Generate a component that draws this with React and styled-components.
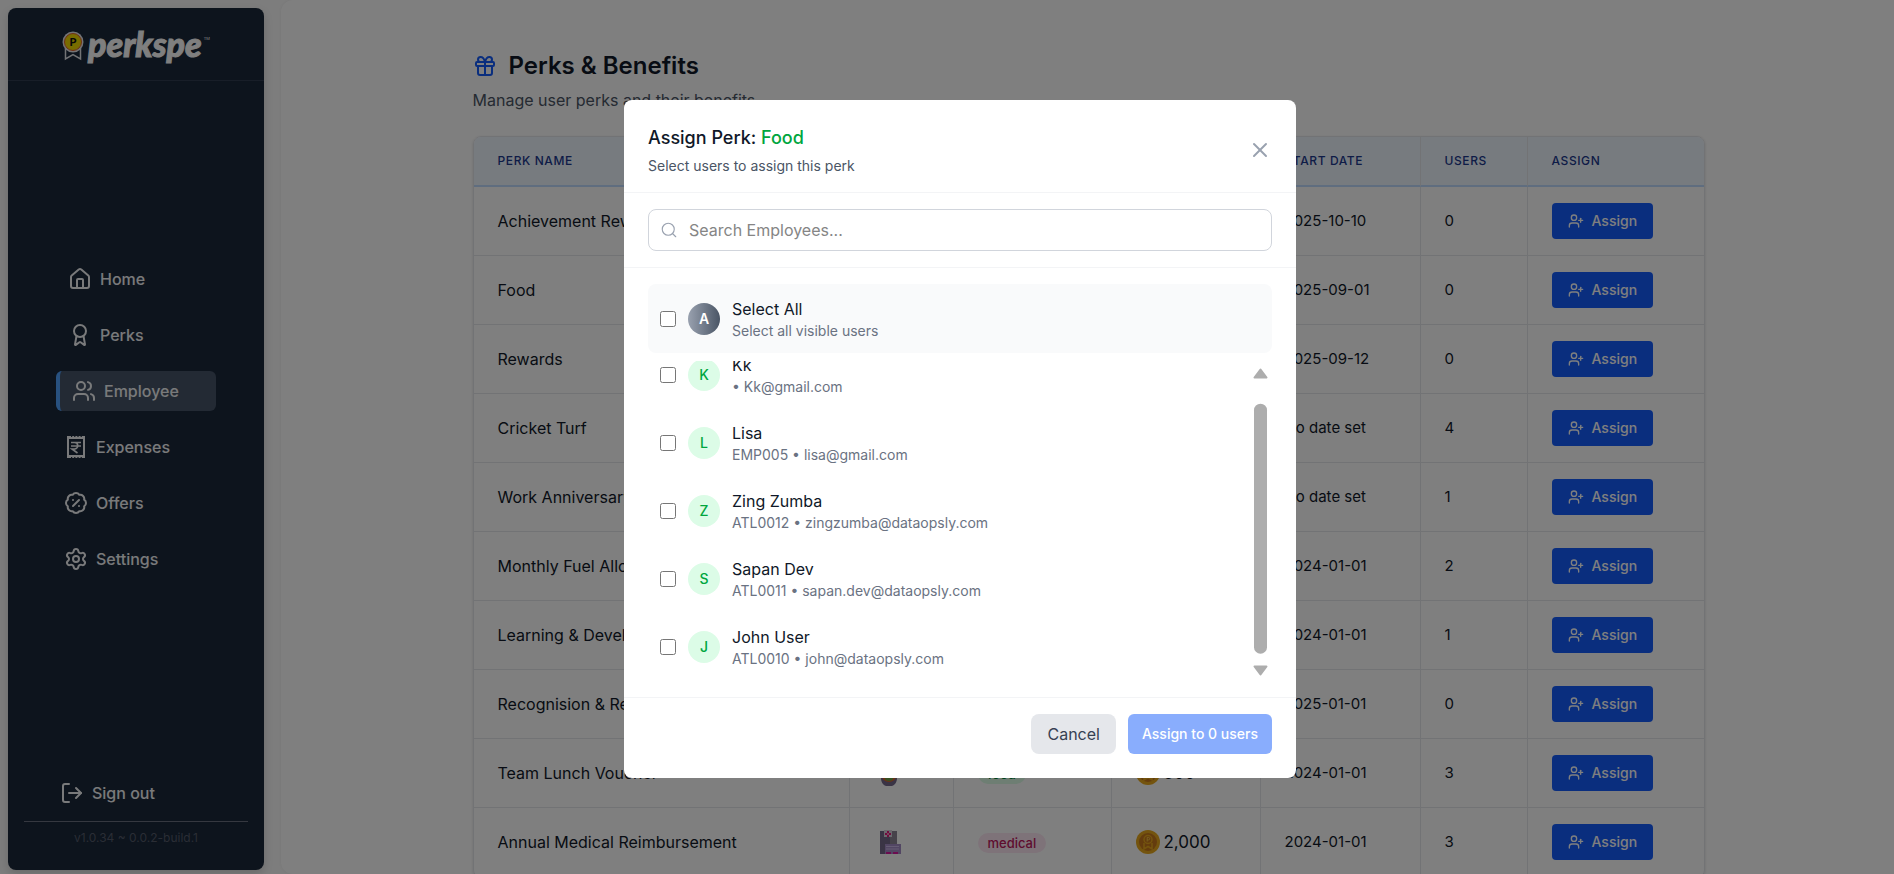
import { useLayoutEffect, useRef, useState } from 'react';
import styled, { createGlobalStyle, css } from 'styled-components';
import {
  Award,
  BadgePercent,
  Gift,
  House,
  LogOut,
  Search,
  Settings,
  UserPlus,
  Users,
  X,
} from 'lucide-react';

const PERKS = [
  { id: 1, name: 'Achievement Reward', category: 'reward', coins: '1,000', date: '2025-10-10', users: 0, art: 'food' },
  { id: 2, name: 'Food', category: 'food', coins: '500', date: '2025-09-01', users: 0, art: 'food' },
  { id: 3, name: 'Rewards', category: 'reward', coins: '500', date: '2025-09-12', users: 0, art: 'food' },
  { id: 4, name: 'Cricket Turf', category: 'sports', coins: '300', date: 'No date set', users: 4, art: 'food' },
  { id: 5, name: 'Work Anniversary', category: 'reward', coins: '1,000', date: 'No date set', users: 1, art: 'food' },
  { id: 6, name: 'Monthly Fuel Allowance', category: 'fuel', coins: '3,000', date: '2024-01-01', users: 2, art: 'food' },
  { id: 7, name: 'Learning & Development', category: 'learning', coins: '5,000', date: '2024-01-01', users: 1, art: 'food' },
  { id: 8, name: 'Recognision & Rewards', category: 'reward', coins: '1,000', date: '2025-01-01', users: 0, art: 'food' },
  { id: 9, name: 'Team Lunch Voucher', category: 'food', coins: '500', date: '2024-01-01', users: 3, art: 'food' },
  { id: 10, name: 'Annual Medical Reimbursement', category: 'medical', coins: '2,000', date: '2024-01-01', users: 3, art: 'medical' },
];

const EMPLOYEES = [
  { id: 1, name: 'Kk', detail: '• Kk@gmail.com' },
  { id: 2, name: 'Lisa', detail: 'EMP005 • lisa@gmail.com' },
  { id: 3, name: 'Zing Zumba', detail: 'ATL0012 • zingzumba@dataopsly.com' },
  { id: 4, name: 'Sapan Dev', detail: 'ATL0011 • sapan.dev@dataopsly.com' },
  { id: 5, name: 'John User', detail: 'ATL0010 • john@dataopsly.com' },
];

const GlobalStyle = createGlobalStyle`
  *, *::before, *::after {
    box-sizing: border-box;
  }
  body {
    margin: 0;
    overflow: hidden;
    background: #fafafa;
    color: #101828;
    font-family: Inter, 'Liberation Sans', sans-serif;
    font-size: 16px;
    line-height: 24px;
  }
  h1, h2, p {
    margin: 0;
  }
  button, input {
    font: inherit;
  }
`;

const Page = styled.div`
  display: flex;
  height: 100vh;
  overflow: hidden;
`;

const Sidebar = styled.aside`
  display: flex;
  flex-direction: column;
  flex: 0 0 256px;
  margin: 8px 17px 4px 8px;
  border-radius: 8px;
  background: #1a283a;
  color: #f3f4f6;
  box-shadow: 0 4px 10px rgba(0, 0, 0, 0.15);
`;

const Brand = styled.div`
  display: flex;
  align-items: center;
  justify-content: center;
  height: 73px;
  padding-top: 4px;
  border-bottom: 1px solid #303c50;
`;

const BrandName = styled.span`
  margin: 0 2px 4px 4px;
  color: #ffffff;
  font-family: Lato, sans-serif;
  font-size: 34px;
  font-style: italic;
  font-weight: 900;
  line-height: 32px;
  -webkit-text-stroke: 1px #ffffff;
`;

const TradeMark = styled.sup`
  align-self: flex-start;
  margin-top: 23px;
  font-size: 4px;
  line-height: 8px;
`;

const Nav = styled.nav`
  display: flex;
  flex: 1;
  flex-direction: column;
  justify-content: center;
  gap: 16px;
  padding: 0 48px;
`;

const navItem = css`
  display: flex;
  align-items: center;
  gap: 8px;
  height: 40px;
  border: 0;
  border-radius: 6px;
  background: none;
  color: inherit;
  font-weight: 500;
  text-decoration: none;
`;

const NavLink = styled.a`
  ${navItem}
  padding-left: ${({ $inset }) => $inset}px;
  ${({ $active }) =>
    $active &&
    css`
      border-left: 4px solid #51a2ff;
      background: #465468;
    `}
`;

const SidebarFooter = styled.div`
  padding: 16px 16px 24px;
`;

const SignOut = styled.button`
  ${navItem}
  padding: 0 36px;
`;

const Version = styled.p`
  margin-top: 8px;
  padding-top: 8px;
  border-top: 1px solid #6a7080;
  color: #545b6a;
  font-size: 12px;
  line-height: 16px;
  text-align: center;
`;

const Main = styled.main`
  flex: 1;
  padding: 50px 22px 0 24px;
  border-radius: 12px 0 0 12px;
  background: #ffffff;
  box-shadow: 0 0 3px rgba(0, 0, 0, 0.06);
  overflow: hidden;
`;

const Content = styled.div`
  max-width: 1232px;
  margin: 0 auto;
`;

const PageTitle = styled.h1`
  display: flex;
  align-items: center;
  gap: 12px;
  font-size: 24px;
  font-weight: 600;
  line-height: 32px;

  svg {
    color: #155dfc;
  }
`;

const PageText = styled.p`
  margin: 6px 0 24px;
  color: #4a5565;
`;

const TableFrame = styled.div`
  border: 1px solid #e5e7eb;
  border-radius: 8px;
  box-shadow: 0 1px 3px rgba(0, 0, 0, 0.15);
  overflow: hidden;
`;

const Table = styled.table`
  width: 100%;
  border-collapse: separate;
  border-spacing: 0;
  table-layout: fixed;
`;

const HeadCell = styled.th`
  width: ${({ $width }) => $width};
  height: 50px;
  padding: 0 24px;
  border-bottom: 2px solid #bedbff;
  background: #eff6ff;
  color: #1c398e;
  font-size: 12px;
  font-weight: 500;
  letter-spacing: 0.05em;
  text-align: left;
  text-transform: uppercase;

  & + & {
    border-left: 1px solid #e5e7eb;
  }
`;

const Cell = styled.td`
  height: 69px;
  padding: 0 24px;
  border-bottom: 1px solid #e5e7eb;
  font-size: ${({ $small }) => ($small ? '15px' : '16px')};
  white-space: nowrap;

  & + & {
    border-left: 1px solid #e5e7eb;
  }

  & > svg {
    display: block;
    margin-left: 5px;
  }
`;

const Tag = styled.span`
  display: inline-block;
  padding: 0 10px;
  border-radius: 10px;
  background: ${({ $kind }) => ($kind === 'medical' ? '#fce7f3' : '#dcfce7')};
  color: ${({ $kind }) => ($kind === 'medical' ? '#be185d' : '#008236')};
  font-size: 13px;
  font-weight: 500;
  line-height: 20px;
`;

const Coins = styled.span`
  display: flex;
  align-items: center;
  gap: 4px;
  font-size: 17px;
`;

const AssignButton = styled.button`
  display: flex;
  align-items: center;
  gap: 8px;
  height: 36px;
  padding: 0 16px;
  border: 0;
  border-radius: 4px;
  background: #155dfc;
  color: #ffffff;
  font-size: 14px;
  font-weight: 500;
`;

const Overlay = styled.div`
  position: fixed;
  inset: 0;
  display: flex;
  align-items: center;
  justify-content: center;
  padding: 4px 0 0 26px;
  background: rgba(0, 0, 0, 0.5);
`;

const Dialog = styled.section`
  width: 100%;
  max-width: 672px;
  border-radius: 8px;
  background: #ffffff;
`;

const DialogHeader = styled.header`
  display: flex;
  align-items: center;
  justify-content: space-between;
  padding: 24px 24px 16px;
  border-bottom: 1px solid #f3f4f6;
`;

const DialogTitle = styled.h2`
  font-size: 18px;
  font-weight: 500;
  line-height: 28px;

  span {
    color: #00a63e;
  }
`;

const DialogText = styled.p`
  margin-top: 4px;
  color: #4a5565;
  font-size: 14px;
  line-height: 20px;
`;

const CloseButton = styled.button`
  display: flex;
  padding: 0;
  border: 0;
  background: none;
  color: #99a1af;
`;

const SearchArea = styled.div`
  padding: 16px 24px;
  border-bottom: 1px solid #f3f4f6;
`;

const SearchBox = styled.label`
  display: flex;
  align-items: center;
  gap: 11px;
  height: 42px;
  padding: 0 11px;
  border: 1px solid #d1d5dc;
  border-radius: 8px;
  color: #99a1af;
`;

const SearchInput = styled.input`
  flex: 1;
  min-width: 0;
  padding: 0;
  border: 0;
  outline: 0;
  background: none;

  &::placeholder {
    color: #858585;
  }
`;

const Picker = styled.div`
  padding: 16px 24px;
`;

const UserRow = styled.label`
  display: flex;
  align-items: center;
  gap: 12px;
  height: 68px;
  padding: 0 12px;
`;

const SelectAllRow = styled(UserRow)`
  margin-bottom: 8px;
  height: 69px;
  border-radius: 8px;
  background: #f9fafb;
`;

const Checkbox = styled.input`
  width: 16px;
  height: 16px;
  margin: 0;
`;

const Avatar = styled.span`
  display: flex;
  align-items: center;
  justify-content: center;
  width: 32px;
  height: 32px;
  border-radius: 50%;
  background: ${({ $dark }) => ($dark ? 'linear-gradient(to right, #99a1af, #4a5565)' : '#dcfce7')};
  color: ${({ $dark }) => ($dark ? '#ffffff' : '#00a63e')};
  font-size: 14px;
  font-weight: ${({ $dark }) => ($dark ? 600 : 500)};
`;

const UserName = styled.p`
  line-height: 24px;
`;

const UserDetail = styled.p`
  color: #6a7282;
  font-size: 14px;
  line-height: 20px;
`;

const ListArea = styled.div`
  display: flex;
  height: 320px;
`;

const List = styled.div`
  flex: 1;
  overflow-y: auto;
  scrollbar-width: none;
`;

const Scrollbar = styled.div`
  display: flex;
  flex-direction: column;
  align-items: center;
  width: 23px;
`;

const ScrollArrow = styled.button`
  display: flex;
  align-items: center;
  justify-content: center;
  width: 20px;
  height: 27px;
  padding: ${({ $down }) => ($down ? '5px 0 0' : '0 0 2px')};
  border: 0;
  background: none;
`;

const Track = styled.div`
  flex: 1;
  width: 13px;
`;

const Thumb = styled.div`
  border-radius: 7px;
  background: #adadad;
`;

const DialogFooter = styled.footer`
  display: flex;
  justify-content: flex-end;
  gap: 12px;
  padding: 16px 24px 24px;
  border-top: 1px solid #f3f4f6;
`;

const CancelButton = styled.button`
  height: 40px;
  padding: 0 16px;
  border: 0;
  border-radius: 8px;
  background: #e5e7eb;
  color: #364153;
`;

const SubmitButton = styled.button`
  height: 40px;
  padding: 0 14px;
  border: 0;
  border-radius: 6px;
  background: #155dfc;
  color: #ffffff;
  font-size: 14px;
  font-weight: 500;
  opacity: 0.5;
`;

function BrandBadge() {
  return (
    <svg width="22" height="30" viewBox="0 0 22 30" fill="none" aria-hidden="true">
      <path d="M3.5 17v11l7.500-4.500 7.500 4.500V17" stroke="#e5e7eb" strokeWidth="1.500" />
      <circle cx="11" cy="11" r="10.500" fill="#e5e7eb" />
      <circle cx="11" cy="11" r="8.500" fill="#f3d800" stroke="#e0602a" />
      <text x="11" y="15" textAnchor="middle" fontFamily="Lato" fontSize="11" fontWeight="900" fill="#111111">
        P
      </text>
    </svg>
  );
}

function ReceiptRupee() {
  return (
    <svg width="24" height="24" viewBox="0 0 24 24" fill="none" stroke="currentColor" strokeWidth="2" aria-hidden="true">
      <path d="M4 1v22M20 1v22" />
      <path d="M5 1.500h15M5 22.500h15" strokeWidth="1" strokeDasharray="2 1.200" />
      <path d="M4 3h16M4 21h16" strokeWidth="2" />
      <path d="M7 7.500h10M7 11h10M7.500 7.500h3a3.200 3.200 0 0 1 0 6.500H8l5.500 4" strokeWidth="1.600" />
    </svg>
  );
}

function Coin() {
  return (
    <svg width="24" height="24" viewBox="0 0 24 24" fill="none" aria-hidden="true">
      <circle cx="12" cy="12" r="12" fill="#e8a91c" />
      <circle cx="12" cy="12" r="9" fill="#c9781c" />
      <path d="M8 13v6l4-2.500 4 2.500v-6" stroke="#e8a91c" strokeWidth="1.500" />
      <circle cx="12" cy="9.500" r="4" fill="#c9781c" stroke="#e8a91c" strokeWidth="1.500" />
      <path d="M11.200 11.500v-4h1.300a1.200 1.200 0 0 1 0 2.400h-1.300" stroke="#f0c040" />
    </svg>
  );
}

function MedicalArt() {
  return (
    <svg width="22" height="24" viewBox="0 0 22 24" aria-hidden="true">
      <path d="M1 1h17v23H1z" fill="#75688a" />
      <path d="M11 1h7v14h-7z" fill="#8c8594" />
      <path d="M5 0h8v7H5z" fill="#d8d0dc" />
      <path d="M9 1v6M6 4h6" stroke="#e0187c" strokeWidth="2" />
      <path d="M9 3h0v2" stroke="#ffffff" />
      <path d="M6 14h16v10H6z" fill="#a58cc6" />
      <path d="M7 16.500h13M7 19h13" stroke="#cdb8e8" />
      <path d="M7 22h5v2H7zM14 22h5v2h-5z" fill="#d818a0" />
    </svg>
  );
}

function FoodArt() {
  return (
    <svg width="20" height="25" viewBox="0 0 20 25" aria-hidden="true">
      <path d="M0 14h20v2l-2 1c0 4-2 7-5 8H7c-3-1-5-4-5-8l-2-1z" fill="#75688a" />
      <ellipse cx="10" cy="15" rx="7" ry="6" fill="#d8632a" />
      <ellipse cx="10" cy="17" rx="4" ry="3" fill="#6da544" />
    </svg>
  );
}

function ArrowUp() {
  return (
    <svg width="15" height="11" viewBox="0 0 15 11" aria-hidden="true">
      <path d="M7.500 1.500 13.500 9.500h-12z" fill="#adadad" stroke="#adadad" strokeWidth="2" strokeLinejoin="round" />
    </svg>
  );
}

function ArrowDown() {
  return (
    <svg width="15" height="11" viewBox="0 0 15 11" aria-hidden="true">
      <path d="M7.500 9.500 13.500 1.500h-12z" fill="#adadad" stroke="#adadad" strokeWidth="2" strokeLinejoin="round" />
    </svg>
  );
}

const NAV = [
  { label: 'Home', icon: House, inset: 12 },
  { label: 'Perks', icon: Award, inset: 12 },
  { label: 'Employee', icon: Users, inset: 12, active: true },
  { label: 'Expenses', icon: ReceiptRupee, inset: 8 },
  { label: 'Offers', icon: BadgePercent, inset: 8 },
  { label: 'Settings', icon: Settings, inset: 8 },
];

const COLUMNS = [
  { label: 'Perk Name' },
  { label: 'Icon', width: '104px' },
  { label: 'Category', width: '158px' },
  { label: 'Coins', width: '149px' },
  { label: 'Start Date', width: '160px' },
  { label: 'Users', width: '107px' },
  { label: 'Assign', width: '177px' },
];

function SideMenu() {
  return (
    <Sidebar>
      <Brand>
        <BrandBadge />
        <BrandName>perkspe</BrandName>
        <TradeMark>TM</TradeMark>
      </Brand>
      <Nav>
        {NAV.map(({ label, icon: Icon, inset, active }) => (
          <NavLink key={label} href="#" $inset={inset} $active={active}>
            <Icon size={24} />
            {label}
          </NavLink>
        ))}
      </Nav>
      <SidebarFooter>
        <SignOut type="button">
          <LogOut size={24} />
          Sign out
        </SignOut>
        <Version>v1.0.34 ~ 0.0.2-build.1</Version>
      </SidebarFooter>
    </Sidebar>
  );
}

function PerksTable() {
  return (
    <TableFrame>
      <Table>
        <thead>
          <tr>
            {COLUMNS.map(({ label, width }) => (
              <HeadCell key={label} $width={width}>
                {label}
              </HeadCell>
            ))}
          </tr>
        </thead>
        <tbody>
          {PERKS.map(({ id, name, category, coins, date, users, art }) => (
            <tr key={id}>
              <Cell>{name}</Cell>
              <Cell>{art === 'medical' ? <MedicalArt /> : <FoodArt />}</Cell>
              <Cell>
                <Tag $kind={category}>{category}</Tag>
              </Cell>
              <Cell>
                <Coins>
                  <Coin />
                  {coins}
                </Coins>
              </Cell>
              <Cell $small>{date}</Cell>
              <Cell $small>{users}</Cell>
              <Cell>
                <AssignButton type="button">
                  <UserPlus size={16} />
                  Assign
                </AssignButton>
              </Cell>
            </tr>
          ))}
        </tbody>
      </Table>
    </TableFrame>
  );
}

function EmployeeList() {
  const listRef = useRef(null);
  const [thumb, setThumb] = useState({ top: 0, size: 100 });

  const updateThumb = () => {
    const { scrollTop, scrollHeight, clientHeight } = listRef.current;
    setThumb({
      top: (scrollTop / scrollHeight) * 100,
      size: (clientHeight / scrollHeight) * 100,
    });
  };

  const scrollBy = (amount) => {
    listRef.current.scrollTop += amount;
  };

  useLayoutEffect(() => {
    listRef.current.scrollTop = listRef.current.scrollHeight;
    updateThumb();
  }, []);

  return (
    <ListArea>
      <List ref={listRef} onScroll={updateThumb}>
        {EMPLOYEES.map(({ id, name, detail }) => (
          <UserRow key={id}>
            <Checkbox type="checkbox" />
            <Avatar>{name[0]}</Avatar>
            <div>
              <UserName>{name}</UserName>
              <UserDetail>{detail}</UserDetail>
            </div>
          </UserRow>
        ))}
      </List>
      <Scrollbar>
        <ScrollArrow type="button" aria-label="Scroll up" onClick={() => scrollBy(-20)}>
          <ArrowUp />
        </ScrollArrow>
        <Track>
          <Thumb style={{ height: `${thumb.size}%`, transform: `translateY(${(thumb.top / thumb.size) * 100}%)` }} />
        </Track>
        <ScrollArrow $down type="button" aria-label="Scroll down" onClick={() => scrollBy(20)}>
          <ArrowDown />
        </ScrollArrow>
      </Scrollbar>
    </ListArea>
  );
}

function AssignDialog() {
  return (
    <Overlay>
      <Dialog role="dialog" aria-modal="true" aria-labelledby="assign-title">
        <DialogHeader>
          <div>
            <DialogTitle id="assign-title">
              Assign Perk: <span>Food</span>
            </DialogTitle>
            <DialogText>Select users to assign this perk</DialogText>
          </div>
          <CloseButton type="button" aria-label="Close">
            <X size={24} />
          </CloseButton>
        </DialogHeader>
        <SearchArea>
          <SearchBox>
            <Search size={18} strokeWidth={1.5} />
            <SearchInput type="text" placeholder="Search Employees..." aria-label="Search Employees" />
          </SearchBox>
        </SearchArea>
        <Picker>
          <SelectAllRow>
            <Checkbox type="checkbox" />
            <Avatar $dark>A</Avatar>
            <div>
              <UserName>Select All</UserName>
              <UserDetail>Select all visible users</UserDetail>
            </div>
          </SelectAllRow>
          <EmployeeList />
        </Picker>
        <DialogFooter>
          <CancelButton type="button">Cancel</CancelButton>
          <SubmitButton type="button" disabled>
            Assign to 0 users
          </SubmitButton>
        </DialogFooter>
      </Dialog>
    </Overlay>
  );
}

function App() {
  return (
    <>
      <GlobalStyle />
      <Page>
        <SideMenu />
        <Main>
          <Content>
            <PageTitle>
              <Gift size={24} />
              Perks &amp; Benefits
            </PageTitle>
            <PageText>Manage user perks and their benefits</PageText>
            <PerksTable />
          </Content>
        </Main>
      </Page>
      <AssignDialog />
    </>
  );
}

export default App;
